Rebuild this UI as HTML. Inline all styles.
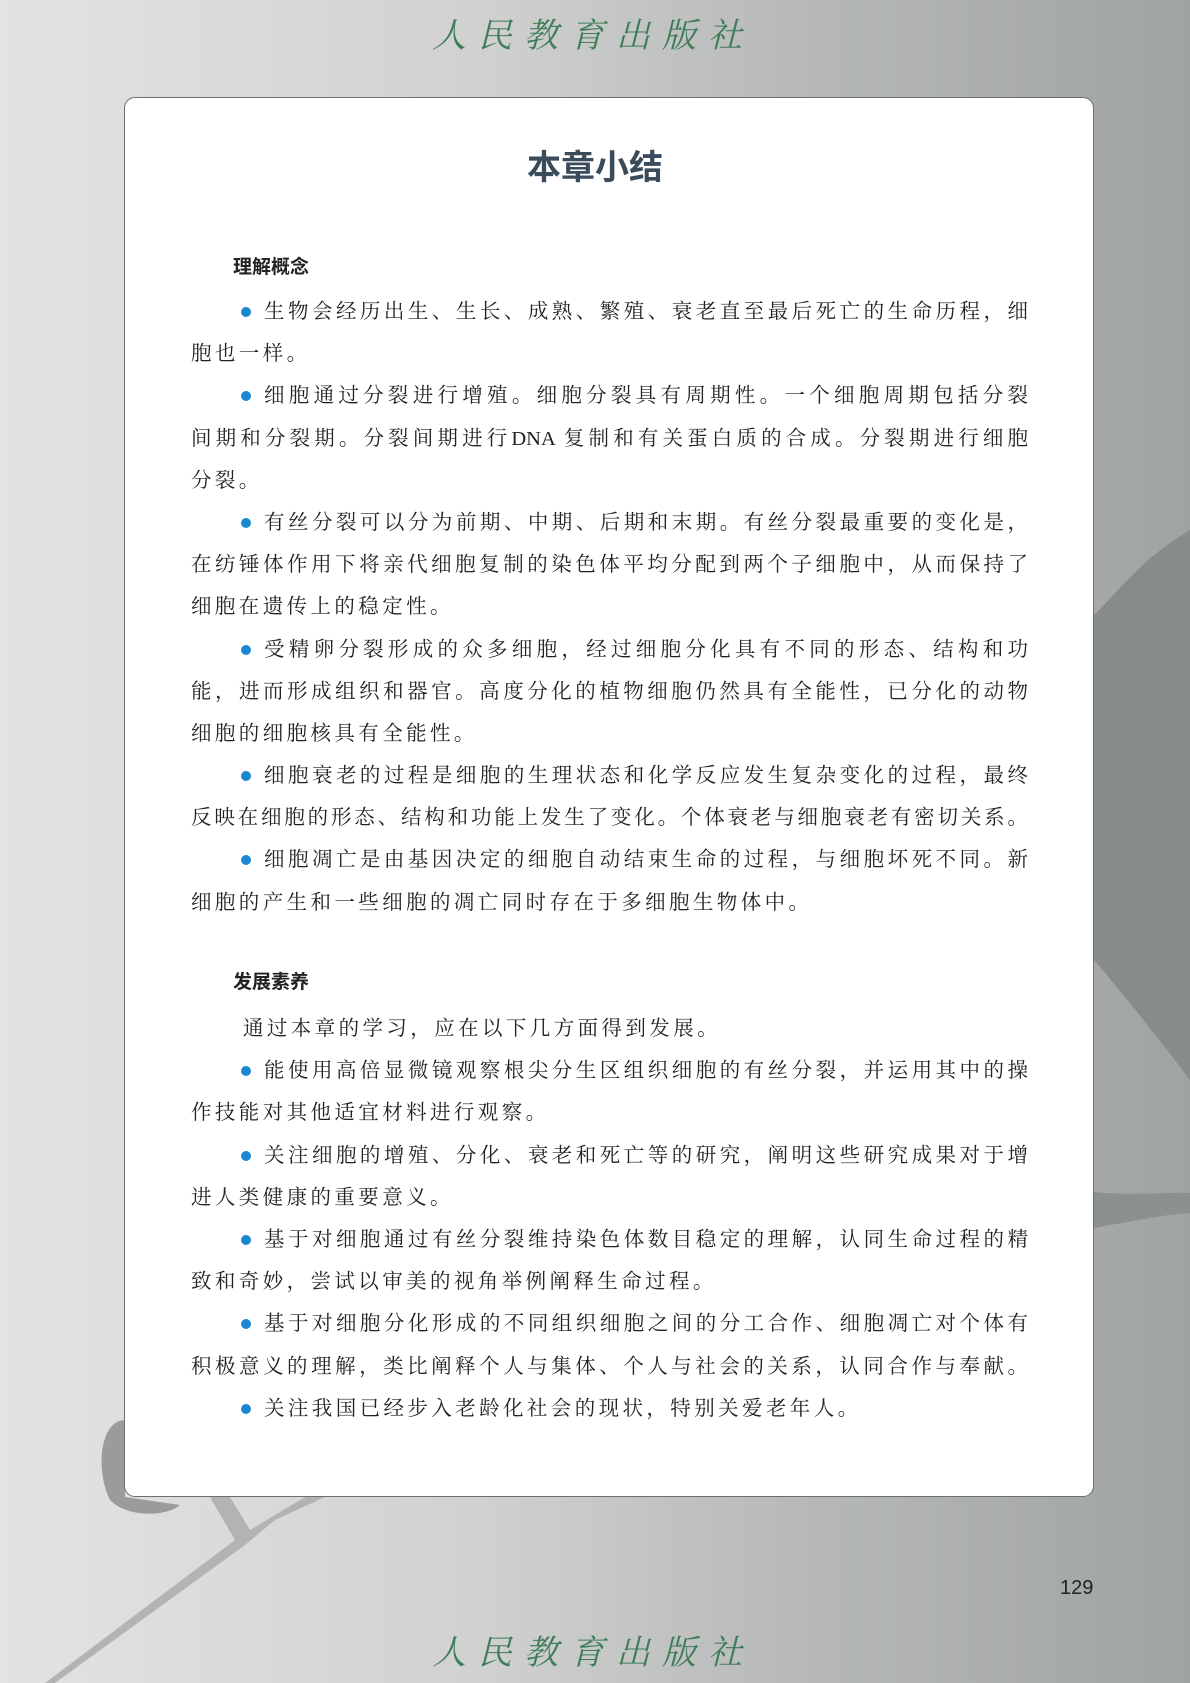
<!DOCTYPE html>
<html><head><meta charset="utf-8"><style>
html,body{margin:0;padding:0}
body{width:1190px;height:1683px;position:relative;overflow:hidden;background:linear-gradient(90deg,#e3e3e3 0%,#d0d1d0 40%,#b4b7b6 70%,#9fa3a1 100%);font-family:"Liberation Serif","Noto Serif CJK SC",serif}
.logo{position:absolute;left:432px;width:340px;text-align:left;font-family:"Noto Serif CJK SC",serif;font-style:italic;color:#3e7d58;font-size:34px;letter-spacing:12px;line-height:40px}
.card{position:absolute;left:124px;top:97px;width:968px;height:1398px;background:#fff;border:1px solid #6d6f6f;border-radius:11px}
.title{position:absolute;left:0;width:1190px;top:140px;text-align:center;font-family:"Noto Sans CJK SC",sans-serif;font-weight:bold;font-size:34px;color:#3a4b5c;line-height:50px}
.h{position:absolute;left:233px;font-family:"Noto Sans CJK SC",sans-serif;font-weight:bold;font-size:19px;color:#222;line-height:30px}
.blk{position:absolute;left:191px;width:837px;font-size:20.5px;color:#222}
.l{height:42.2px;line-height:42.2px;white-space:nowrap;text-align:justify;text-align-last:justify}
.e{text-align-last:left;letter-spacing:3.4px}
.i{padding-left:52px;position:relative}
.i.b::before{content:"";position:absolute;left:50px;top:16px;width:10px;height:10px;border-radius:50%;background:#1a88d0}
.i.b{padding-left:73px}
.pn{position:absolute;left:1060px;top:1577px;font-family:"Liberation Sans",sans-serif;font-size:20px;color:#222}
</style></head><body>
<svg width="1190" height="1683" style="position:absolute;left:0;top:0">
<path d="M1094 615 C1120 590 1140 560 1190 530 L1190 1080 C1160 1040 1120 990 1094 960 Z" fill="#878b8a"/>
<path d="M1094 1192 C1130 1196 1160 1192 1190 1193 L1190 1213 C1160 1215 1130 1222 1094 1228 Z" fill="#8c908f"/>
<path d="M125 1420 C100 1420 95 1470 110 1500 C130 1520 170 1515 180 1505 L125 1497 Z" fill="#9a9c9c"/>
<path d="M55 1683 L245 1545 L275 1520 L325 1497 L305 1497 L250 1530 L230 1497 L210 1497 L235 1540 L45 1683 Z" fill="#b2b4b4"/>
</svg>
<div class="logo" style="top:13px">人民教育出版社</div>
<div class="logo" style="top:1630px">人民教育出版社</div>
<div class="card"></div>
<div class="title">本章小结</div>
<div class="h" style="top:251px">理解概念</div>
<div class="blk" style="top:291px">
<div class="l i b">生物会经历出生、生长、成熟、繁殖、衰老直至最后死亡的生命历程，细</div>
<div class="l e">胞也一样。</div>
<div class="l i b">细胞通过分裂进行增殖。细胞分裂具有周期性。一个细胞周期包括分裂</div>
<div class="l">间期和分裂期。分裂间期进行DNA 复制和有关蛋白质的合成。分裂期进行细胞</div>
<div class="l e">分裂。</div>
<div class="l i b">有丝分裂可以分为前期、中期、后期和末期。有丝分裂最重要的变化是，</div>
<div class="l">在纺锤体作用下将亲代细胞复制的染色体平均分配到两个子细胞中，从而保持了</div>
<div class="l e">细胞在遗传上的稳定性。</div>
<div class="l i b">受精卵分裂形成的众多细胞，经过细胞分化具有不同的形态、结构和功</div>
<div class="l">能，进而形成组织和器官。高度分化的植物细胞仍然具有全能性，已分化的动物</div>
<div class="l e">细胞的细胞核具有全能性。</div>
<div class="l i b">细胞衰老的过程是细胞的生理状态和化学反应发生复杂变化的过程，最终</div>
<div class="l">反映在细胞的形态、结构和功能上发生了变化。个体衰老与细胞衰老有密切关系。</div>
<div class="l i b">细胞凋亡是由基因决定的细胞自动结束生命的过程，与细胞坏死不同。新</div>
<div class="l e">细胞的产生和一些细胞的凋亡同时存在于多细胞生物体中。</div>
</div>
<div class="h" style="top:966px">发展素养</div>
<div class="blk" style="top:1008px">
<div class="l i e">通过本章的学习，应在以下几方面得到发展。</div>
<div class="l i b">能使用高倍显微镜观察根尖分生区组织细胞的有丝分裂，并运用其中的操</div>
<div class="l e">作技能对其他适宜材料进行观察。</div>
<div class="l i b">关注细胞的增殖、分化、衰老和死亡等的研究，阐明这些研究成果对于增</div>
<div class="l e">进人类健康的重要意义。</div>
<div class="l i b">基于对细胞通过有丝分裂维持染色体数目稳定的理解，认同生命过程的精</div>
<div class="l e">致和奇妙，尝试以审美的视角举例阐释生命过程。</div>
<div class="l i b">基于对细胞分化形成的不同组织细胞之间的分工合作、细胞凋亡对个体有</div>
<div class="l">积极意义的理解，类比阐释个人与集体、个人与社会的关系，认同合作与奉献。</div>
<div class="l i b e">关注我国已经步入老龄化社会的现状，特别关爱老年人。</div>
</div>
<div class="pn">129</div>
</body></html>
